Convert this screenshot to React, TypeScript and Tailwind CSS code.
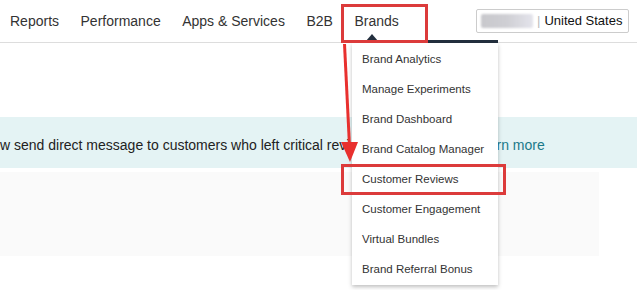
import React from 'react';

const navItems = ['Reports', 'Performance', 'Apps & Services', 'B2B', 'Brands'];

const menuItems = [
  'Brand Analytics',
  'Manage Experiments',
  'Brand Dashboard',
  'Brand Catalog Manager',
  'Customer Reviews',
  'Customer Engagement',
  'Virtual Bundles',
  'Brand Referral Bonus',
];

export default function App() {
  return (
    <div className="relative h-[290px] w-[637px] overflow-hidden bg-white font-['Liberation_Sans',Arial,sans-serif] text-[#333]">
      {/* top nav */}
      <div className="flex h-[43px] items-center border-b border-[#ddd]">
        <nav className="flex items-center gap-[21.5px] pl-[10px] text-[14px] text-[#333]">
          {navItems.map((n) => (
            <span key={n}>{n}</span>
          ))}
        </nav>
        <div className="ml-auto mr-[8px] flex h-[24px] w-[153px] items-center rounded-[2px] border border-[#ccc] bg-white pl-[4px] text-[13px] text-[#111]">
          <span className="h-[14px] w-[52px] rounded-[2px] bg-gradient-to-r from-[#c8c8cc] via-[#cfcfd4] to-[#e4e4ec] blur-[1px]" />
          <span className="ml-[4px] text-[#bbb]">|</span>
          <span className="ml-[4px]">United States</span>
        </div>
      </div>

      {/* page body */}
      <div className="mt-[74px] flex h-[51px] items-center bg-[#e4f3f4] pt-[5px] text-[14px] text-[#222]">
        <span className="whitespace-nowrap">w send direct message to customers who left critical reviews.</span>
        <a className="ml-[95px] whitespace-nowrap text-[#1b7a8a]">Learn more</a>
      </div>
      <div className="mt-[4px] h-[84px] w-[599px] bg-[#fafafa]" />

      {/* active underline + caret */}
      <div className="absolute left-[352px] top-[40px] h-[3px] w-[146px] bg-[#232f3e]" />
      <svg className="absolute left-[366px] top-[34px]" width="12" height="7" viewBox="0 0 12 7">
        <path d="M6 0 L12 7 L0 7 Z" fill="#232f3e" />
      </svg>

      {/* dropdown */}
      <div className="absolute left-[352px] top-[43px] w-[146px] bg-white pt-[2px] shadow-[0_2px_4px_rgba(0,0,0,0.25)]">
        {menuItems.map((m) => (
          <div key={m} className="flex h-[30px] items-center whitespace-nowrap pl-[10px] text-[11.5px] text-[#333]">
            {m}
          </div>
        ))}
      </div>

      {/* annotations */}
      <div className="absolute left-[341px] top-[4px] h-[39px] w-[87px] border-[3px] border-[#dc3b3b]" />
      <div className="absolute left-[341px] top-[164px] h-[31px] w-[165px] border-[3px] border-[#dc3b3b]" />
      <svg className="absolute left-[336px] top-[42px]" width="24" height="124" viewBox="0 0 24 124">
        <path d="M8.5 2 L13.5 104" stroke="#e8302e" strokeWidth="3" />
        <path d="M5 100 L22 100 L14 120 Z" fill="#e8302e" />
      </svg>
    </div>
  );
}
